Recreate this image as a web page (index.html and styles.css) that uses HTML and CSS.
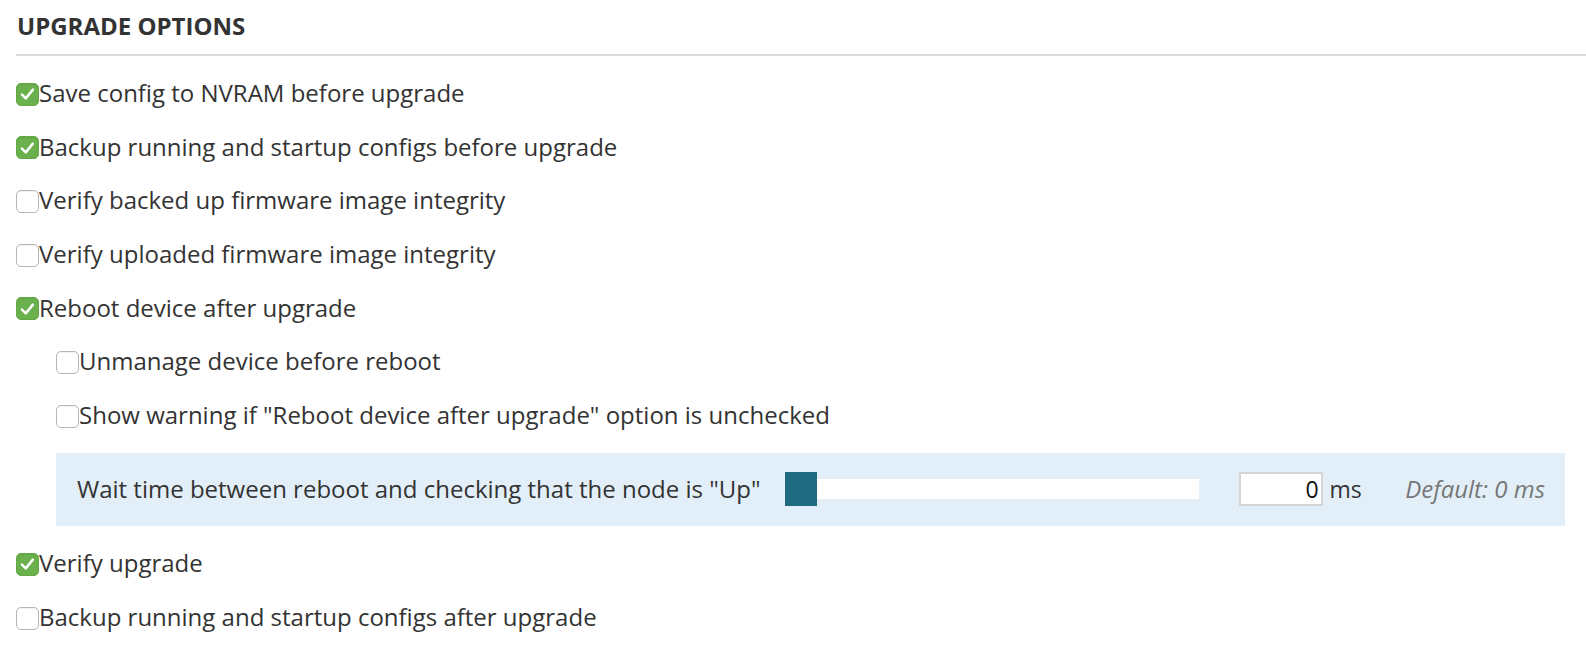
FILE: index.html
```html
<!DOCTYPE html>
<html lang="en">
<head>
<meta charset="utf-8">
<title>Upgrade options</title>
<link rel="stylesheet" href="styles.css">
</head>
<body>
<div class="panel">
  <h2 class="title">UPGRADE OPTIONS</h2>
  <ul class="options">
    <li class="opt"><span class="cb on"><svg viewBox="0 0 22 22" width="22" height="22"><polyline points="5.2,11.6 9.2,15.6 16.6,6.4" fill="none" stroke="#fff" stroke-width="2.6" stroke-linecap="round" stroke-linejoin="round"/></svg></span>Save config to NVRAM before upgrade</li>
    <li class="opt"><span class="cb on"><svg viewBox="0 0 22 22" width="22" height="22"><polyline points="5.2,11.6 9.2,15.6 16.6,6.4" fill="none" stroke="#fff" stroke-width="2.6" stroke-linecap="round" stroke-linejoin="round"/></svg></span>Backup running and startup configs before upgrade</li>
    <li class="opt"><span class="cb"></span>Verify backed up firmware image integrity</li>
    <li class="opt"><span class="cb"></span>Verify uploaded firmware image integrity</li>
    <li class="opt"><span class="cb on"><svg viewBox="0 0 22 22" width="22" height="22"><polyline points="5.2,11.6 9.2,15.6 16.6,6.4" fill="none" stroke="#fff" stroke-width="2.6" stroke-linecap="round" stroke-linejoin="round"/></svg></span>Reboot device after upgrade</li>
    <li class="opt sub"><span class="cb"></span>Unmanage device before reboot</li>
    <li class="opt sub"><span class="cb"></span>Show warning if "Reboot device after upgrade" option is unchecked</li>
    <li class="wait">
      <span class="wait-label">Wait time between reboot and checking that the node is "Up"</span>
      <span class="slider"><span class="thumb"></span></span>
      <span class="num">0</span>
      <span class="unit">ms</span>
      <span class="default">Default: 0 ms</span>
    </li>
    <li class="opt"><span class="cb on"><svg viewBox="0 0 22 22" width="22" height="22"><polyline points="5.2,11.6 9.2,15.6 16.6,6.4" fill="none" stroke="#fff" stroke-width="2.6" stroke-linecap="round" stroke-linejoin="round"/></svg></span>Verify upgrade</li>
    <li class="opt"><span class="cb"></span>Backup running and startup configs after upgrade</li>
  </ul>
</div>
</body>
</html>
```
FILE: styles.css
```css
html, body {
  margin: 0;
  padding: 0;
  background: #fff;
}

body {
  font-family: "Open Sans", "Liberation Sans", sans-serif;
  color: #333;
  font-size: 24px;
}

.panel {
  padding-left: 16px;
}

.title {
  margin: 0;
  padding: 10px 0 12px 1px;
  font-size: 24px;
  font-weight: 700;
  line-height: 32px;
  color: #333;
  border-bottom: 2px solid #dcdcd6;
}

.options {
  list-style: none;
  margin: 0;
  padding: 21px 21px 0 0;
}

.opt {
  display: flex;
  align-items: center;
  line-height: 32px;
  margin-bottom: 21.7px;
}

.opt.sub {
  margin-left: 40px;
}

.cb {
  box-sizing: border-box;
  width: 23px;
  height: 23px;
  margin-top: 2px;
  border: 1px solid #b5b5b5;
  border-radius: 5px;
  background: #fff;
  box-shadow: inset 0 1px 1px rgba(0,0,0,0.06);
  display: flex;
  align-items: center;
  justify-content: center;
  flex: none;
}

.cb.on {
  background: #6ab04c;
  border-color: #62a845;
}

.cb svg {
  display: block;
}

.wait {
  display: flex;
  align-items: center;
  margin: 3px 0 21.5px 40px;
  height: 73px;
  padding: 0 20px 0 21px;
  background: #e2eff8;
  line-height: 32px;
}

.wait-label {
  flex: none;
}

.slider {
  flex: none;
  width: 414px;
  height: 20px;
  margin-left: 24px;
  background: #fff;
  display: flex;
  align-items: center;
}

.thumb {
  width: 32px;
  height: 34px;
  background: #206a80;
}

.num {
  box-sizing: border-box;
  flex: none;
  width: 84px;
  height: 34px;
  margin-left: 40px;
  border: 2px solid #d4d4d4;
  background: #fff;
  text-align: right;
  padding-right: 2px;
  font-size: 23px;
  line-height: 30px;
  color: #111;
}

.unit {
  margin-left: 7px;
  font-size: 23px;
}

.default {
  margin-left: auto;
  font-style: italic;
  font-size: 24px;
  color: #777;
}
```
